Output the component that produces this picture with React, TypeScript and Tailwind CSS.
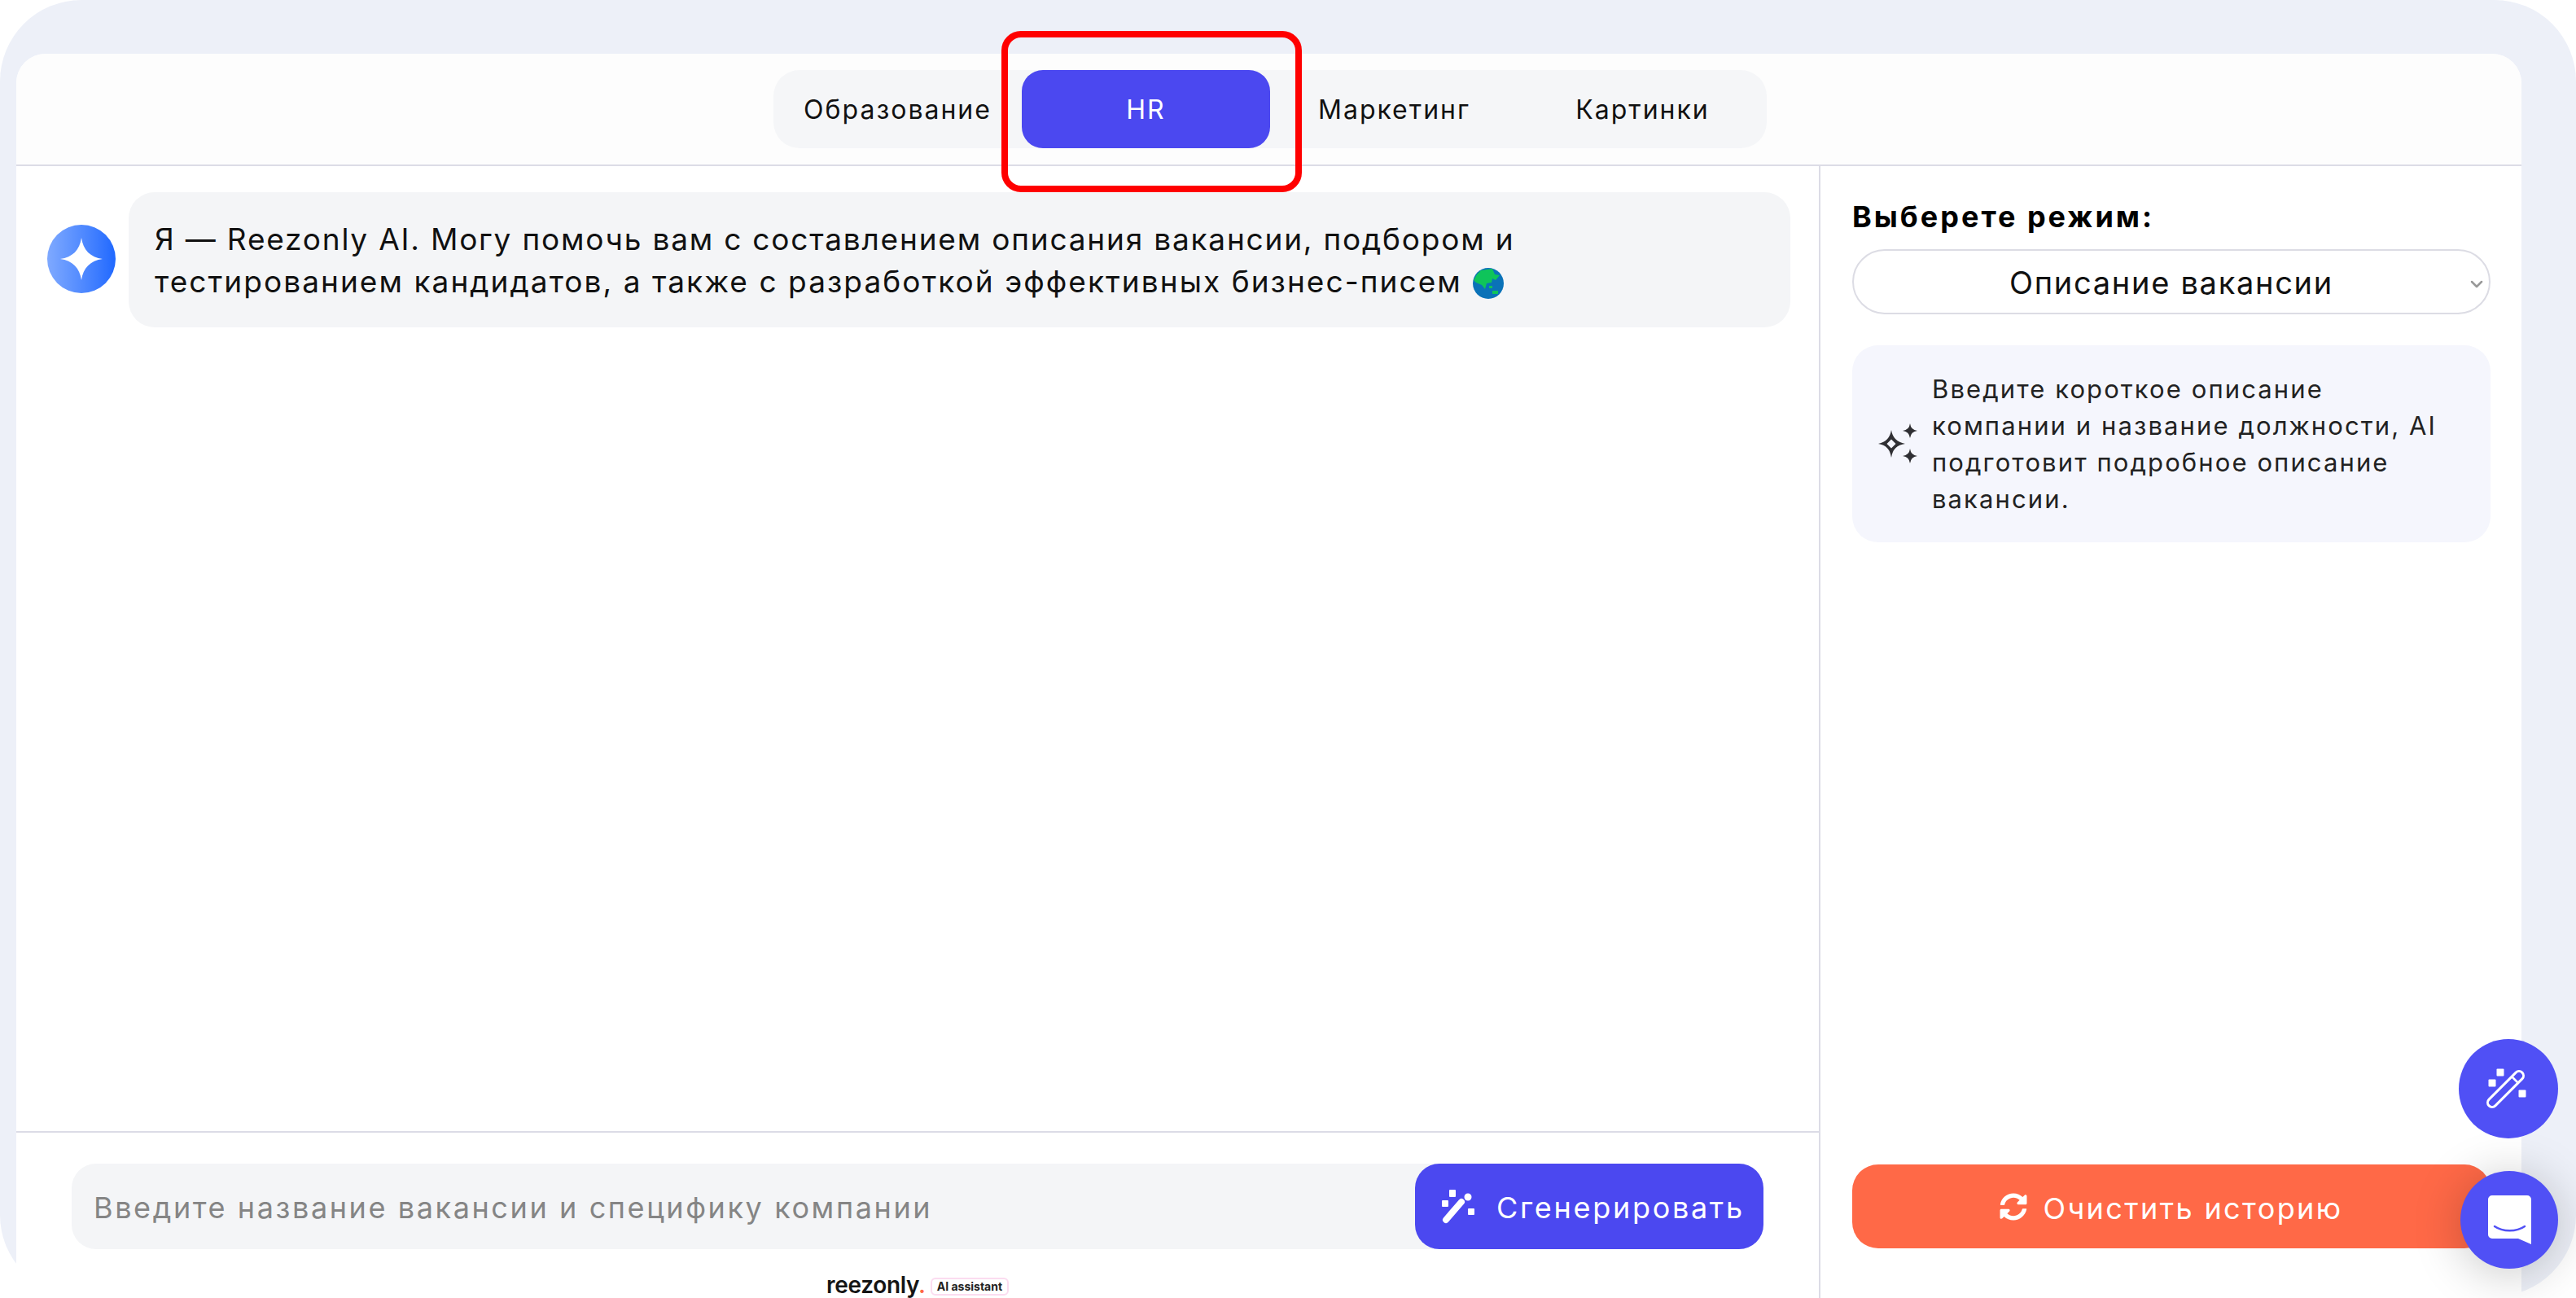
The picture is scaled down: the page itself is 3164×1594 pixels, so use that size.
import { ChevronDown } from "lucide-react";
import { FaSyncAlt } from "react-icons/fa";

const font = "font-['Inter','Noto_Sans',sans-serif]";

function WandIcon({ className }: { className?: string }) {
  return (
    <svg viewBox="11 9 40 42" className={className} fill="white" aria-hidden="true">
      <path d="M16 46 L35 24" stroke="white" strokeWidth="8" strokeLinecap="round" fill="none" />
      <circle cx="43" cy="18" r="4.5" />
      <rect x="20" y="9" width="8" height="9" rx="1" />
      <rect x="11" y="22" width="8" height="8" rx="1" />
      <rect x="43" y="32" width="8" height="8" rx="1" />
    </svg>
  );
}

function OutlineWand({ className }: { className?: string }) {
  return (
    <svg viewBox="0 0 84 84" className={className} aria-hidden="true">
      <path d="M22 59 L55 26" stroke="white" strokeWidth="14" strokeLinecap="round" fill="none" />
      <path d="M22 59 L55 26" stroke="#5050f5" strokeWidth="8" strokeLinecap="round" fill="none" />
      <path d="M46 27 L54 35" stroke="white" strokeWidth="2.5" fill="none" />
      <rect x="27.5" y="17.5" width="9" height="9" fill="white" rx="1" />
      <rect x="17.5" y="30.5" width="9" height="9" fill="white" rx="1" />
      <rect x="54.5" y="43.5" width="9" height="9" fill="white" rx="1" />
    </svg>
  );
}

function Sparkles({ className }: { className?: string }) {
  return (
    <svg viewBox="17 9 48 50" className={className} aria-hidden="true">
      <path d="M33 17 Q35 31 50 34 Q35 36 33 51 Q31 36 17 34 Q31 31 33 17 Z" fill="#2f2f33" />
      <path d="M33 28.5 L38.5 34 L33 39.5 L27.5 34 Z" fill="#f5f6fd" />
      <path d="M56 9 Q57 17 65 18 Q57 19 56 27 Q55 19 47 18 Q55 17 56 9 Z" fill="#2f2f33" />
      <path d="M56 40 Q57 48 65 49 Q57 50 56 58 Q55 50 47 49 Q55 48 56 40 Z" fill="#2f2f33" />
    </svg>
  );
}

function Globe() {
  return (
    <svg viewBox="0 0 38 38" className="ml-[13px] inline-block h-[38px] w-[38px] align-[-8px]" aria-hidden="true">
      <circle cx="19" cy="19" r="19" fill="#0a72b8" />
      <path d="M10 3 L24 1 L27 8 L33 9 L28 15 L24 13 L23 18 L17 19 L15 26 L11 21 L4 18 L1 15 L5 8 Z" fill="#0fc45a" />
      <path d="M24 28 h7 v4 h-7 Z M20 22 h4 v3 h-4 Z" fill="#0fc45a" />
    </svg>
  );
}

const tabs = ["Образование", "HR", "Маркетинг", "Картинки"];

export default function App() {
  return (
    <div className={`relative h-[1594px] w-[3164px] overflow-hidden bg-white ${font}`}>
      <div className="h-[1592px] rounded-[100px] bg-[#edf0f8] pl-[20px] pr-[67px] pt-[66px]">
        <div className="flex h-[1528px] flex-col rounded-t-[36px] bg-white text-[#111]">
          <header className="flex h-[138px] shrink-0 justify-center rounded-t-[36px] border-b-2 border-[#dcdce6] bg-[#fdfdfd] pl-[3px] pt-[20px]">
            <nav className="grid h-[96px] w-[1220px] grid-cols-4 rounded-[32px] bg-[#f5f6f8]">
              {tabs.map((tab) =>
                tab === "HR" ? (
                  <div key={tab} className="relative flex items-center justify-center rounded-[26px] bg-[#4b48f0] pt-[2px] text-[32px] tracking-[2px] text-white">
                    {tab}
                    <div className="absolute -bottom-[54px] -left-[25px] -right-[39px] -top-[48px] rounded-[24px] border-8 border-[#ff0000]" />
                  </div>
                ) : (
                  <div key={tab} className="flex items-center justify-center pt-[2px] text-[32px] tracking-[2px]">
                    {tab}
                  </div>
                ),
              )}
            </nav>
          </header>

          <div className="flex min-h-0 flex-1">
            <main className="flex w-[2216px] shrink-0 flex-col border-r-2 border-[#dcdce6]">
              <div className="flex flex-1 items-start gap-[16px] pl-[38px] pr-[35px] pt-[32px]">
                <div className="mt-[40px] flex h-[84px] w-[84px] shrink-0 items-center justify-center rounded-full bg-linear-to-r from-[#7fa9ff] to-[#1f68ff]">
                  <svg viewBox="0 0 52 52" className="h-[52px] w-[52px]" aria-hidden="true">
                    <path d="M26 0 C28 15 37 24 52 26 C37 28 28 37 26 52 C24 37 15 28 0 26 C15 24 24 15 26 0 Z" fill="white" />
                  </svg>
                </div>
                <div className="flex-1 rounded-[32px] bg-[#f4f5f7] pb-[30px] pl-[32px] pr-[32px] pt-[32px] text-[37px] leading-[52px]">
                  <span className="tracking-[1.8px]">Я — Reezonly AI. Могу помочь вам с составлением описания вакансии, подбором и</span>
                  <br />
                  <span className="tracking-[2.05px]">тестированием кандидатов, а также с разработкой эффективных бизнес-писем</span>
                  <Globe />
                </div>
              </div>

              <div className="h-[205px] shrink-0 border-t-2 border-[#dcdce6] px-[68px] pt-[38px]">
                <div className="flex h-[105px] items-center rounded-[30px] bg-[#f4f5f7] pl-[27px]">
                  <input
                    readOnly
                    placeholder="Введите название вакансии и специфику компании"
                    className="min-w-0 flex-1 bg-transparent pt-[2px] text-[36px] tracking-[2.6px] outline-none placeholder:text-[#858585]"
                  />
                  <button className="flex h-[105px] w-[428px] shrink-0 items-center gap-[27px] rounded-[30px] bg-[#4b48f0] pl-[33px] text-[36px] tracking-[2.7px] text-white">
                    <WandIcon className="h-[42px] w-[40px]" />
                    <span className="pt-[2px]">Сгенерировать</span>
                  </button>
                </div>
                <div className="mt-[30px] flex items-start justify-center gap-[6px]">
                  <span className="text-[28px] font-semibold leading-[28px] tracking-[-0.3px] text-[#151515]">
                    reezonly<span className="text-[#ff6947]">.</span>
                  </span>
                  <span className="mt-[5px] rounded-[6px] border-2 border-[#fbdcf0] px-[6px] text-[14px] font-bold leading-[18px] text-[#222]">
                    AI assistant
                  </span>
                </div>
              </div>
            </main>

            <aside className="flex min-w-0 flex-1 flex-col pb-[61px] pl-[39px] pr-[38px] pt-[42px]">
              <h2 className="text-[36px] font-bold leading-[40px] tracking-[3px] text-black">Выберете режим:</h2>
              <div className="relative mt-[20px]">
                <select
                  defaultValue="Описание вакансии"
                  className="h-[80px] w-full appearance-none rounded-[40px] border-2 border-[#dcdce4] bg-white pt-[2px] text-center text-[38px] tracking-[1.7px] text-[#111]"
                >
                  <option>Описание вакансии</option>
                </select>
                <ChevronDown className="pointer-events-none absolute right-[5px] top-[31px] h-[24px] w-[24px] text-[#999]" strokeWidth={2.5} />
              </div>
              <div className="mt-[38px] flex h-[242px] items-center gap-[18px] rounded-[32px] bg-[#f5f6fd] pl-[32px]">
                <Sparkles className="h-[50px] w-[48px] shrink-0" />
                <p className="text-[31px] leading-[45px] tracking-[2.1px] text-[#222]">
                  Введите короткое описание
                  <br />
                  компании и название должности, AI
                  <br />
                  подготовит подробное описание
                  <br />
                  вакансии.
                </p>
              </div>
              <button className="mt-auto flex h-[103px] w-full shrink-0 items-center justify-center gap-[19px] rounded-[32px] bg-[#ff6947] text-[36px] tracking-[2.4px] text-white">
                <FaSyncAlt className="h-[34px] w-[34px]" />
                <span className="pt-[4px]">Очистить историю</span>
              </button>
            </aside>
          </div>
        </div>
      </div>

      <button className="absolute right-[22px] top-[1276px] flex h-[122px] w-[122px] items-center justify-center rounded-full bg-[#5050f5]">
        <OutlineWand className="h-[84px] w-[84px]" />
      </button>
      <button className="absolute right-[22px] top-[1438px] flex h-[120px] w-[120px] items-center justify-center rounded-full bg-[#5050f5] shadow-[0_6px_60px_rgba(0,0,0,0.22)]">
        <svg viewBox="0 0 53 60" className="h-[60px] w-[53px]" aria-hidden="true">
          <path d="M5 0 H48 A5 5 0 0 1 53 5 V60 L37 53 H5 A5 5 0 0 1 0 48 V5 A5 5 0 0 1 5 0 Z" fill="white" />
          <path d="M8 38 C18 45 35 45 45 38" fill="none" stroke="#5050f5" strokeWidth="2.5" strokeLinecap="round" />
        </svg>
      </button>
    </div>
  );
}
